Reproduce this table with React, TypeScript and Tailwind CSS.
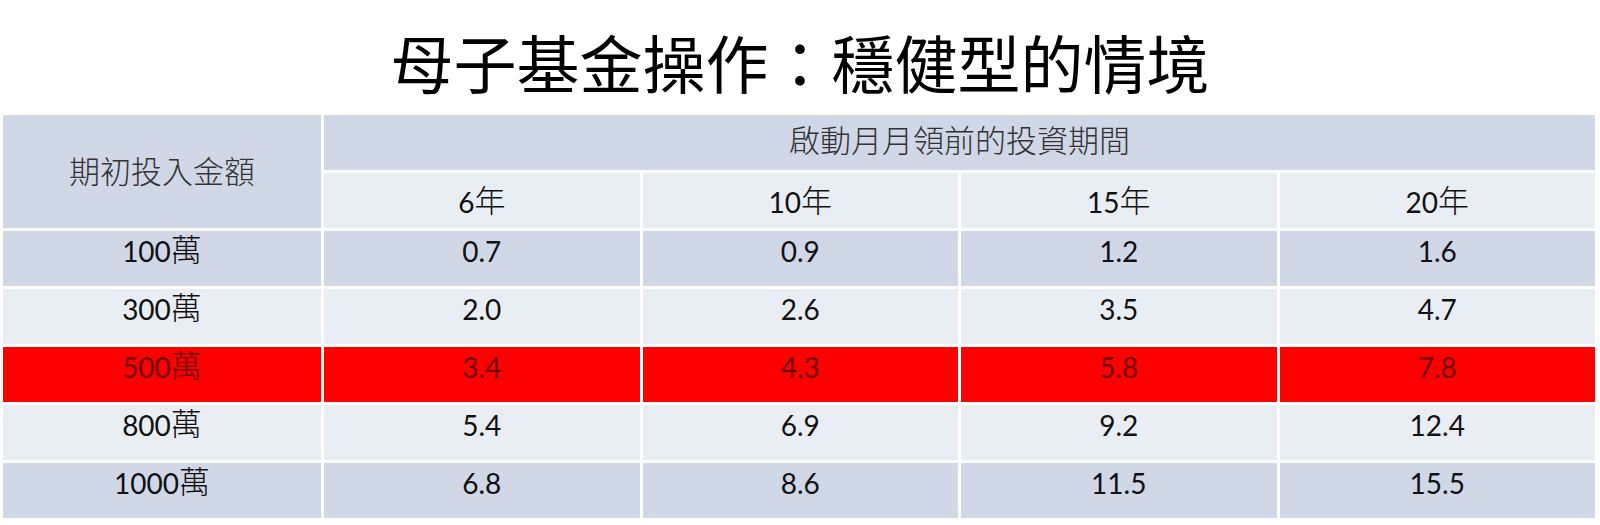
import React from "react";

const rows: { cells: string[]; tone: "dark" | "light" | "red" }[] = [
  { cells: ["100萬", "0.7", "0.9", "1.2", "1.6"], tone: "dark" },
  { cells: ["300萬", "2.0", "2.6", "3.5", "4.7"], tone: "light" },
  { cells: ["500萬", "3.4", "4.3", "5.8", "7.8"], tone: "red" },
  { cells: ["800萬", "5.4", "6.9", "9.2", "12.4"], tone: "light" },
  { cells: ["1000萬", "6.8", "8.6", "11.5", "15.5"], tone: "dark" },
];

function Txt({ s }: { s: string }) {
  const parts = s.match(/[0-9.]+|[^0-9.]+/g) || [];
  return (
    <>
      {parts.map((p, i) =>
        /[0-9.]/.test(p) ? (
          <span key={i}>{p}</span>
        ) : (
          <span
            key={i}
            className="font-['Noto_Sans_CJK_TC','Noto_Sans_CJK_SC',sans-serif] font-light text-[31px] leading-none align-[-3px]"
          >
            {p}
          </span>
        )
      )}
    </>
  );
}

const cellBase =
  "flex justify-center items-start whitespace-nowrap leading-[38px] text-[28px] font-['Lato','Noto_Sans_CJK_TC',sans-serif]";

export default function App() {
  return (
    <div className="w-[1600px] h-[525px] bg-white overflow-hidden">
      <div className="flex justify-center pt-[29px]">
        <h1 className="h-[64px] text-[63px] leading-none text-black font-normal font-['Noto_Sans_CJK_TC','Noto_Sans_CJK_SC',sans-serif]">
          母子基金操作：穩健型的情境
        </h1>
      </div>
      <div className="ml-[3px] mt-[22px] w-[1592px] grid grid-cols-[318px_repeat(4,minmax(0,1fr))] gap-[3px] text-[#111]">
        <div className={`${cellBase} row-span-2 h-[113px] bg-[#d0d8e8] pt-[39px] text-[#333]`}>
          <Txt s="期初投入金額" />
        </div>
        <div className={`${cellBase} col-span-4 h-[55px] bg-[#d0d8e8] pt-[8px] text-[#333]`}>
          <Txt s="啟動月月領前的投資期間" />
        </div>
        {["6年", "10年", "15年", "20年"].map((h) => (
          <div key={h} className={`${cellBase} h-[55px] bg-[#e9edf4] pt-[10px]`}>
            <Txt s={h} />
          </div>
        ))}
        {rows.map((r) =>
          r.cells.map((c, j) => (
            <div
              key={r.cells[0] + j}
              className={`${cellBase} h-[55px] pt-[1px] ${
                r.tone === "dark"
                  ? "bg-[#d0d8e8]"
                  : r.tone === "light"
                  ? "bg-[#e9edf4]"
                  : "bg-[#ff0000] text-[#6e0000]"
              }`}
            >
              <Txt s={c} />
            </div>
          ))
        )}
      </div>
    </div>
  );
}
